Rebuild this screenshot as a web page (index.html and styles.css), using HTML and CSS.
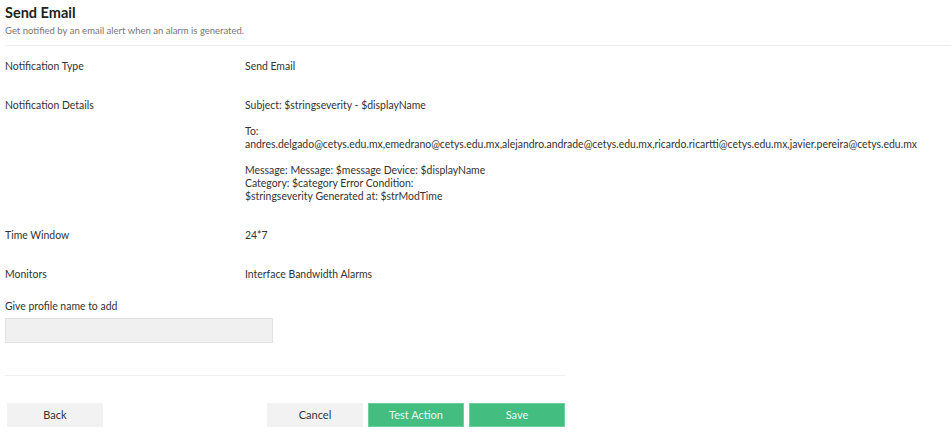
FILE: index.html
```html
<!DOCTYPE html>
<html>
<head>
<meta charset="utf-8">
<link rel="stylesheet" href="styles.css">
</head>
<body>
<div class="page">
  <div class="header">
    <h1 class="title">Send Email</h1>
    <p class="subtitle">Get notified by an email alert when an alarm is generated.</p>
  </div>
  <div class="details">
    <div class="row">
      <div class="label">Notification Type</div>
      <div class="value">Send Email</div>
    </div>
    <div class="row">
      <div class="label">Notification Details</div>
      <div class="value">
        <p class="para">Subject: $stringseverity - $displayName</p>
        <p class="para">To:<br>andres.delgado@cetys.edu.mx,emedrano@cetys.edu.mx,alejandro.andrade@cetys.edu.mx,ricardo.ricartti@cetys.edu.mx,javier.pereira@cetys.edu.mx</p>
        <p class="para">Message: Message: $message Device: $displayName<br>Category: $category Error Condition:<br>$stringseverity Generated at: $strModTime</p>
      </div>
    </div>
    <div class="row">
      <div class="label">Time Window</div>
      <div class="value">24*7</div>
    </div>
    <div class="row">
      <div class="label">Monitors</div>
      <div class="value">Interface Bandwidth Alarms</div>
    </div>
  </div>
  <div class="profile">
    <label class="profile-label">Give profile name to add</label>
    <input class="profile-input" type="text">
  </div>
  <div class="footer">
    <button class="btn btn-grey">Back</button>
    <div class="footer-right">
      <button class="btn btn-grey">Cancel</button>
      <button class="btn btn-green">Test Action</button>
      <button class="btn btn-green">Save</button>
    </div>
  </div>
</div>
</body>
</html>
```
FILE: styles.css
```css
html, body {
  margin: 0;
  padding: 0;
  background: #fff;
}
body {
  font-family: Lato, "Open Sans", sans-serif;
  font-size: 10.45px;
  color: #333;
}
.page {
  padding: 0 0 0 5px;
}
.header {
  padding-top: 4px;
  border-bottom: 1px solid #f0f0f0;
  padding-bottom: 8px;
}
.title {
  margin: 0;
  font-size: 14.5px;
  font-weight: 700;
  line-height: 18px;
  color: #222;
}
.subtitle {
  margin: 3px 0 0;
  font-size: 9.5px;
  line-height: 12px;
  color: #777;
}
.details {
  padding-top: 1.5px;
}
.row {
  display: flex;
  padding: 13px 0 13px;
  line-height: 13px;
}
.row:first-child {
  padding-top: 12px;
}
.label {
  width: 240px;
  flex: none;
}
.value {
  flex: 1;
}
.para {
  margin: 0 0 13px;
}
.para:last-child {
  margin-bottom: 0;
}
.profile {
  display: flex;
  flex-direction: column;
  align-items: flex-start;
  padding-top: 6px;
}
.profile-label {
  line-height: 13px;
  margin-bottom: 5px;
}
.profile-input {
  box-sizing: border-box;
  width: 268px;
  height: 25px;
  margin: 0;
  background: #f0f0f0;
  border: 1px solid #e2e2e2;
  border-radius: 0;
}
.footer {
  width: 560px;
  margin-top: 32px;
  border-top: 1px solid #f0f0f0;
  padding-top: 27px;
  display: flex;
  justify-content: space-between;
}
.footer-right {
  display: flex;
  gap: 5px;
}
.btn {
  box-sizing: border-box;
  width: 96px;
  height: 24px;
  font-family: Lato, "Open Sans", sans-serif;
  font-size: 11px;
  border: 1px solid transparent;
  border-radius: 0;
  padding: 0;
  margin: 0;
}
.footer > .btn {
  margin-left: 2px;
}
.btn-grey {
  background: #f2f2f2;
  color: #333;
  border-color: #f2f2f2;
}
.btn-green {
  background: #44bd80;
  color: #e8f8ef;
  border-color: #6fcf9e;
}
```
